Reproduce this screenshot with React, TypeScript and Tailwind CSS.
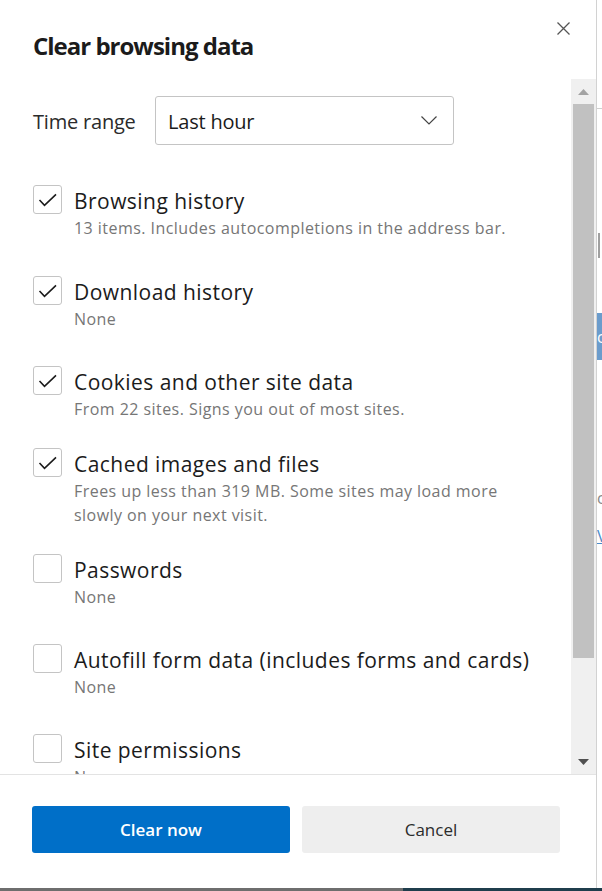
import React from 'react';

const FONT = { fontFamily: '"Open Sans", "Noto Sans", Arial, sans-serif' };

const ITEMS = [
  { label: 'Browsing history', desc: ['13 items. Includes autocompletions in the address bar.'], checked: true, mt: 'mt-0' },
  { label: 'Download history', desc: ['None'], checked: true, mt: 'mt-[36px]' },
  { label: 'Cookies and other site data', desc: ['From 22 sites. Signs you out of most sites.'], checked: true, mt: 'mt-[35px]' },
  {
    label: 'Cached images and files',
    desc: ['Frees up less than 319 MB. Some sites may load more', 'slowly on your next visit.'],
    checked: true,
    mt: 'mt-[27px]',
  },
  { label: 'Passwords', desc: ['None'], checked: false, mt: 'mt-[27px]' },
  { label: 'Autofill form data (includes forms and cards)', desc: ['None'], checked: false, mt: 'mt-[35px]' },
  { label: 'Site permissions', desc: ['None'], checked: false, mt: 'mt-[35px]' },
];

function Checkbox({ checked }: { checked: boolean }) {
  return (
    <div className="w-[29px] h-[29px] shrink-0 rounded-[3px] border border-[#c4c4c4] bg-white">
      {checked && (
        <svg width="27" height="27" viewBox="0 0 27 27" fill="none">
          <path d="M5.5 14 L10.5 19.3 L22 8.3" stroke="#1b1b1b" strokeWidth="1.6" />
        </svg>
      )}
    </div>
  );
}

function Scrollbar() {
  return (
    <div className="w-[25px] shrink-0 flex flex-col bg-[#f0f0f0]">
      <div className="h-[25px] flex items-center justify-center">
        <svg width="11" height="6" viewBox="0 0 11 6">
          <path d="M0 6 L5.5 0 L11 6 Z" fill="#a3a3a3" />
        </svg>
      </div>
      <div className="h-[554px] ml-[2px] mr-[2px] bg-[#c1c1c1]" />
      <div className="flex-1" />
      <div className="h-[24px] flex items-center justify-center">
        <svg width="11" height="6" viewBox="0 0 11 6">
          <path d="M0 0 L11 0 L5.5 6 Z" fill="#505050" />
        </svg>
      </div>
    </div>
  );
}

export default function App() {
  return (
    <div className="w-[602px] h-[891px] flex flex-col bg-white overflow-hidden" style={FONT}>
      <div className="flex h-[888px]">
        {/* dialog */}
        <div className="w-[597px] shrink-0 flex flex-col border-r border-[#d2d2d2] bg-white">
          <div className="h-[79px] shrink-0 flex items-start">
            <h2 className="pl-[33px] pt-[30px] text-[24px] leading-[32px] font-bold text-[#1b1b1b] tracking-[-1px]">
              Clear browsing data
            </h2>
            <button className="ml-auto mt-[22px] mr-[26px] w-[13px] h-[13px]">
              <svg width="13" height="13" viewBox="0 0 13 13" fill="none">
                <path d="M0.5 0.5 L12.5 12.5 M12.5 0.5 L0.5 12.5" stroke="#555" strokeWidth="1.3" />
              </svg>
            </button>
          </div>

          <div className="h-[695px] shrink-0 flex">
            <div className="flex-1 overflow-hidden pl-[33px] pt-[17px]">
              <div className="flex items-center">
                <span className="w-[122px] shrink-0 pt-[3px] text-[20px] leading-[28px] text-[#2b2b2b] tracking-[-0.2px]">
                  Time range
                </span>
                <div className="w-[299px] h-[49px] flex items-center justify-between rounded-[3px] border border-[#c4c4c4] pl-[12px] pr-[16px]">
                  <span className="pt-[2px] text-[20px] leading-[28px] text-[#1b1b1b] tracking-[-0.2px]">Last hour</span>
                  <svg width="16" height="9" viewBox="0 0 16 9" fill="none">
                    <path d="M0.5 0.5 L8 8 L15.5 0.5" stroke="#444" strokeWidth="1.2" />
                  </svg>
                </div>
              </div>

              <div className="mt-[40px] flex flex-col">
                {ITEMS.map((item, i) => (
                  <div key={i} className={`flex gap-[12px] ${item.mt}`}>
                    <Checkbox checked={item.checked} />
                    <div className="flex flex-col">
                      <span className="pt-[2px] text-[21px] leading-[28px] tracking-[0.45px] text-[#1b1b1b] whitespace-nowrap">
                        {item.label}
                      </span>
                      <div className="mt-[1px]">
                        {item.desc.map((d, j) => (
                          <p key={j} className="text-[16px] leading-[24px] tracking-[0.45px] text-[#767676] whitespace-nowrap">
                            {d}
                          </p>
                        ))}
                      </div>
                    </div>
                  </div>
                ))}
              </div>
            </div>
            <Scrollbar />
          </div>

          <div className="flex-1 border-t border-[#e3e3e3] pt-[31px] pl-[32px] flex items-start gap-[12px]">
            <button className="w-[258px] h-[47px] rounded-[3px] bg-[#006fc8] text-white text-[17px] font-semibold">
              Clear now
            </button>
            <button className="w-[258px] h-[47px] rounded-[3px] bg-[#eeeeee] text-[#2b2b2b] text-[17px]">
              Cancel
            </button>
          </div>
        </div>

        {/* page behind the dialog */}
        <div className="flex-1 flex flex-col overflow-hidden bg-white">
          <div className="mt-[108px] h-px bg-[#d0d0d0]" />
          <div className="mt-[124px] ml-[1px] w-[2px] h-[25px] bg-[#a0a0a0]" />
          <div className="mt-[55px] h-[47px] bg-[#6b9ccc] flex items-center text-white text-[16px] overflow-hidden">c</div>
          <span className="mt-[128px] text-[16px] leading-[20px] text-[#888] whitespace-nowrap">c</span>
          <span className="mt-[18px] text-[16px] leading-[20px] text-[#4a8ac9] underline whitespace-nowrap">V</span>
        </div>
      </div>
      <div className="h-[3px] flex">
        <div className="w-[403px] bg-[#6e6e6e]" />
        <div className="flex-1 bg-[#1f3d4c]" />
      </div>
    </div>
  );
}
